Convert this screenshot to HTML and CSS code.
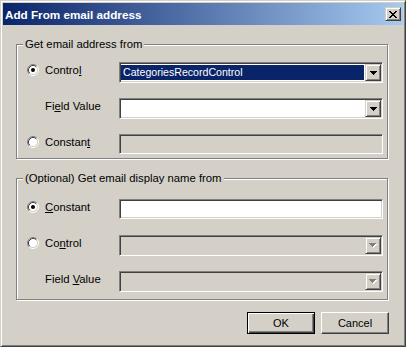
FILE: index.html
```html
<!DOCTYPE html>
<html>
<head>
<meta charset="utf-8">
<link rel="stylesheet" href="styles.css">
</head>
<body>
<div class="window">
  <div class="titlebar">
    <span class="title">Add From email address</span>
    <span class="close-btn"><svg width="8" height="7" viewBox="0 0 8 7"><path d="M0 0h2v1h-2z M6 0h2v1h-2z M1 1h2v1h-2z M5 1h2v1h-2z M2 2h4v1h-4z M3 3h2v1h-2z M2 4h4v1h-4z M1 5h2v1h-2z M5 5h2v1h-2z M0 6h2v1h-2z M6 6h2v1h-2z" fill="#000"/></svg></span>
  </div>
  <div class="content">
    <div class="group g1">
      <div class="group-title">Get email address from</div>
      <div class="rows r1">
        <svg class="radio" width="12" height="12" viewBox="0 0 12 12"><circle cx="6" cy="6" r="4.5" fill="#fff"/><path d="M2.11 9.89A5.5 5.5 0 0 1 9.89 2.11" fill="none" stroke="#808080"/><path d="M9.89 2.11A5.5 5.5 0 0 1 2.11 9.89" fill="none" stroke="#fff"/><path d="M2.82 9.18A4.5 4.5 0 0 1 9.18 2.82" fill="none" stroke="#404040"/><path d="M9.18 2.82A4.5 4.5 0 0 1 2.82 9.18" fill="none" stroke="#d4d0c8"/><circle cx="6" cy="6" r="2" fill="#000"/></svg>
        <span class="label">Contro<u>l</u></span>
        <div class="combo"><div class="field"><span class="sel">CategoriesRecordControl</span></div><span class="drop"><svg width="7" height="4" viewBox="0 0 7 4"><path d="M0 0H7V1H6V2H5V3H4V4H3V3H2V2H1V1H0Z" fill="#000"/></svg></span></div>

        <span class="label col2">Fi<u>e</u>ld Value</span>
        <div class="combo"><div class="field"></div><span class="drop"><svg width="7" height="4" viewBox="0 0 7 4"><path d="M0 0H7V1H6V2H5V3H4V4H3V3H2V2H1V1H0Z" fill="#000"/></svg></span></div>

        <svg class="radio" width="12" height="12" viewBox="0 0 12 12"><circle cx="6" cy="6" r="4.5" fill="#fff"/><path d="M2.11 9.89A5.5 5.5 0 0 1 9.89 2.11" fill="none" stroke="#808080"/><path d="M9.89 2.11A5.5 5.5 0 0 1 2.11 9.89" fill="none" stroke="#fff"/><path d="M2.82 9.18A4.5 4.5 0 0 1 9.18 2.82" fill="none" stroke="#404040"/><path d="M9.18 2.82A4.5 4.5 0 0 1 2.82 9.18" fill="none" stroke="#d4d0c8"/></svg>
        <span class="label">Constan<u>t</u></span>
        <div class="textbox disabled"></div>
      </div>
    </div>

    <div class="group g2">
      <div class="group-title">(Optional) Get email display name from</div>
      <div class="rows r2">
        <svg class="radio" width="12" height="12" viewBox="0 0 12 12"><circle cx="6" cy="6" r="4.5" fill="#fff"/><path d="M2.11 9.89A5.5 5.5 0 0 1 9.89 2.11" fill="none" stroke="#808080"/><path d="M9.89 2.11A5.5 5.5 0 0 1 2.11 9.89" fill="none" stroke="#fff"/><path d="M2.82 9.18A4.5 4.5 0 0 1 9.18 2.82" fill="none" stroke="#404040"/><path d="M9.18 2.82A4.5 4.5 0 0 1 2.82 9.18" fill="none" stroke="#d4d0c8"/><circle cx="6" cy="6" r="2" fill="#000"/></svg>
        <span class="label"><u>C</u>onstant</span>
        <div class="textbox"></div>

        <svg class="radio" width="12" height="12" viewBox="0 0 12 12"><circle cx="6" cy="6" r="4.5" fill="#fff"/><path d="M2.11 9.89A5.5 5.5 0 0 1 9.89 2.11" fill="none" stroke="#808080"/><path d="M9.89 2.11A5.5 5.5 0 0 1 2.11 9.89" fill="none" stroke="#fff"/><path d="M2.82 9.18A4.5 4.5 0 0 1 9.18 2.82" fill="none" stroke="#404040"/><path d="M9.18 2.82A4.5 4.5 0 0 1 2.82 9.18" fill="none" stroke="#d4d0c8"/></svg>
        <span class="label">Co<u>n</u>trol</span>
        <div class="combo disabled"><div class="field"></div><span class="drop"><svg width="8" height="5" viewBox="0 0 8 5"><path d="M1 1H8V2H7V3H6V4H5V5H4V4H3V3H2V2H1Z" fill="#fff"/><path d="M0 0H7V1H6V2H5V3H4V4H3V3H2V2H1V1H0Z" fill="#808080"/></svg></span></div>

        <span class="label col2">Field <u>V</u>alue</span>
        <div class="combo disabled"><div class="field"></div><span class="drop"><svg width="8" height="5" viewBox="0 0 8 5"><path d="M1 1H8V2H7V3H6V4H5V5H4V4H3V3H2V2H1Z" fill="#fff"/><path d="M0 0H7V1H6V2H5V3H4V4H3V3H2V2H1V1H0Z" fill="#808080"/></svg></span></div>
      </div>
    </div>

    <div class="buttons">
      <button class="btn default">OK</button>
      <button class="btn">Cancel</button>
    </div>
  </div>
</div>
</body>
</html>
```

FILE: styles.css
```css
html, body {
  margin: 0;
  padding: 0;
  background: #d4d0c8;
}

body {
  font-family: "Liberation Sans", Arial, sans-serif;
  font-size: 11.3px;
  color: #000;
}

.window {
  width: 406px;
  height: 347px;
  box-sizing: border-box;
  border: 1px solid;
  border-color: #d4d0c8 #404040 #404040 #d4d0c8;
  box-shadow: inset 1px 1px #fff, inset -1px -1px #808080;
  padding: 2px;
  background: #d4d0c8;
  display: flex;
  flex-direction: column;
}

.titlebar {
  height: 22px;
  flex: none;
  display: flex;
  align-items: center;
  padding: 0 2px;
  background: linear-gradient(to right, #0a246a, #a6caf0);
}

.title {
  color: #fff;
  font-weight: bold;
  font-size: 11.7px;
  padding-left: 0;
  margin-top: 1px;
}

.close-btn {
  margin-left: auto;
  width: 16px;
  height: 14px;
  box-sizing: border-box;
  border: 1px solid;
  border-color: #d4d0c8 #404040 #404040 #d4d0c8;
  box-shadow: inset 1px 1px #fff, inset -1px -1px #808080;
  background: #d4d0c8;
  display: flex;
  align-items: center;
  justify-content: center;
}

.close-btn svg {
  display: block;
  margin-left: -1px;
}

.content {
  padding-left: 13px;
}

.group {
  width: 372px;
  box-sizing: border-box;
  border: 1px solid #808080;
  box-shadow: inset 1px 1px #fff, 1px 1px #fff;
  margin-top: 19px;
}

.g1 {
  padding-bottom: 3px;
}

.g2 {
  padding-bottom: 7px;
}

.group-title {
  margin: -8px 0 0 6px;
  padding: 0 2px;
  height: 14px;
  line-height: 14px;
  width: fit-content;
  background: #d4d0c8;
  white-space: nowrap;
}

.rows {
  display: grid;
  grid-template-columns: 18px 74px 264px;
  grid-auto-rows: 21px;
  row-gap: 15px;
  padding-left: 10px;
}

.r1 {
  margin-top: 11px;
}

.r2 {
  margin-top: 14px;
}

.radio {
  grid-column: 1;
  align-self: start;
  margin-top: 2px;
  display: block;
}

.label {
  grid-column: 2;
  align-self: start;
  line-height: 14px;
  margin-top: 1px;
  white-space: nowrap;
}

.col2 {
  grid-column: 2;
}

.combo,
.textbox {
  grid-column: 3;
  box-sizing: border-box;
  height: 21px;
  border: 1px solid;
  border-color: #808080 #fff #fff #808080;
  box-shadow: inset 1px 1px #404040, inset -1px -1px #d4d0c8;
  padding: 1px;
  background: #fff;
}

.textbox {
  height: 20px;
}

.disabled {
  background: #d4d0c8;
}

.combo {
  display: flex;
}

.field {
  flex: 1;
  display: flex;
  min-width: 0;
}

.sel {
  flex: 1;
  margin: 1px 1px 1px 0;
  padding-left: 2px;
  background: #0a246a;
  color: #fff;
  font-size: 10.6px;
  line-height: 15px;
  white-space: nowrap;
}

.drop {
  width: 16px;
  height: 17px;
  flex: none;
  box-sizing: border-box;
  border: 1px solid;
  border-color: #d4d0c8 #404040 #404040 #d4d0c8;
  box-shadow: inset 1px 1px #fff, inset -1px -1px #808080;
  background: #d4d0c8;
  display: flex;
  align-items: center;
  justify-content: center;
}

.drop svg {
  display: block;
}

.buttons {
  width: 373px;
  display: flex;
  justify-content: flex-end;
  gap: 6px;
  margin-top: 12px;
}

.btn {
  width: 68px;
  height: 22px;
  box-sizing: border-box;
  font-family: "Liberation Sans", Arial, sans-serif;
  font-size: 11px;
  color: #000;
  background: #d4d0c8;
  border: 1px solid;
  border-color: #fff #404040 #404040 #fff;
  box-shadow: inset -1px -1px #808080;
  padding: 0;
  margin: 0;
}

.btn.default {
  border: 1px solid #000;
  box-shadow: inset 1px 1px #fff, inset -1px -1px #404040, inset -2px -2px #808080;
}
```
